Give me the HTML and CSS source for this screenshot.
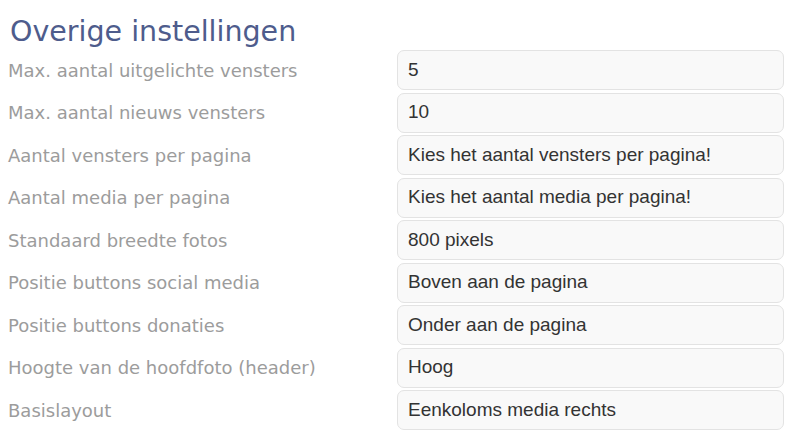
FILE: index.html
```html
<!DOCTYPE html>
<html lang="nl">
<head>
<meta charset="utf-8">
<title>Overige instellingen</title>
<link rel="stylesheet" href="styles.css">
</head>
<body>
<section class="settings">
  <h2 class="title">Overige instellingen</h2>
  <div class="rows">
    <div class="row"><span class="label">Max. aantal uitgelichte vensters</span><div class="field">5</div></div>
    <div class="row"><span class="label">Max. aantal nieuws vensters</span><div class="field">10</div></div>
    <div class="row"><span class="label">Aantal vensters per pagina</span><div class="field">Kies het aantal vensters per pagina!</div></div>
    <div class="row"><span class="label">Aantal media per pagina</span><div class="field">Kies het aantal media per pagina!</div></div>
    <div class="row"><span class="label">Standaard breedte fotos</span><div class="field">800 pixels</div></div>
    <div class="row"><span class="label">Positie buttons social media</span><div class="field">Boven aan de pagina</div></div>
    <div class="row"><span class="label">Positie buttons donaties</span><div class="field">Onder aan de pagina</div></div>
    <div class="row"><span class="label">Hoogte van de hoofdfoto (header)</span><div class="field">Hoog</div></div>
    <div class="row"><span class="label">Basislayout</span><div class="field">Eenkoloms media rechts</div></div>
  </div>
</section>
</body>
</html>
```
FILE: styles.css
```css
html, body {
  margin: 0;
  padding: 0;
  background: #ffffff;
}
.settings {
  padding: 15px 16px 0 8px;
}
.title {
  margin: 0 0 0 2px;
  font-family: "DejaVu Sans", sans-serif;
  font-weight: normal;
  font-size: 28.5px;
  line-height: 33px;
  color: #4e5c8c;
}
.rows {
  display: flex;
  flex-direction: column;
  gap: 2.5px;
  margin-top: 2px;
}
.row {
  display: grid;
  grid-template-columns: 389px 1fr;
  align-items: center;
  height: 40px;
}
.label {
  font-family: "DejaVu Sans", sans-serif;
  font-size: 18px;
  color: #9c9c9c;
}
.field {
  box-sizing: border-box;
  height: 40px;
  display: flex;
  align-items: center;
  padding: 0 10px 1px;
  border: 1px solid #e3e3e3;
  border-radius: 7px;
  background: #f9f9f9;
  font-family: "Liberation Sans", Arial, sans-serif;
  font-size: 19px;
  color: #333333;
}
```
